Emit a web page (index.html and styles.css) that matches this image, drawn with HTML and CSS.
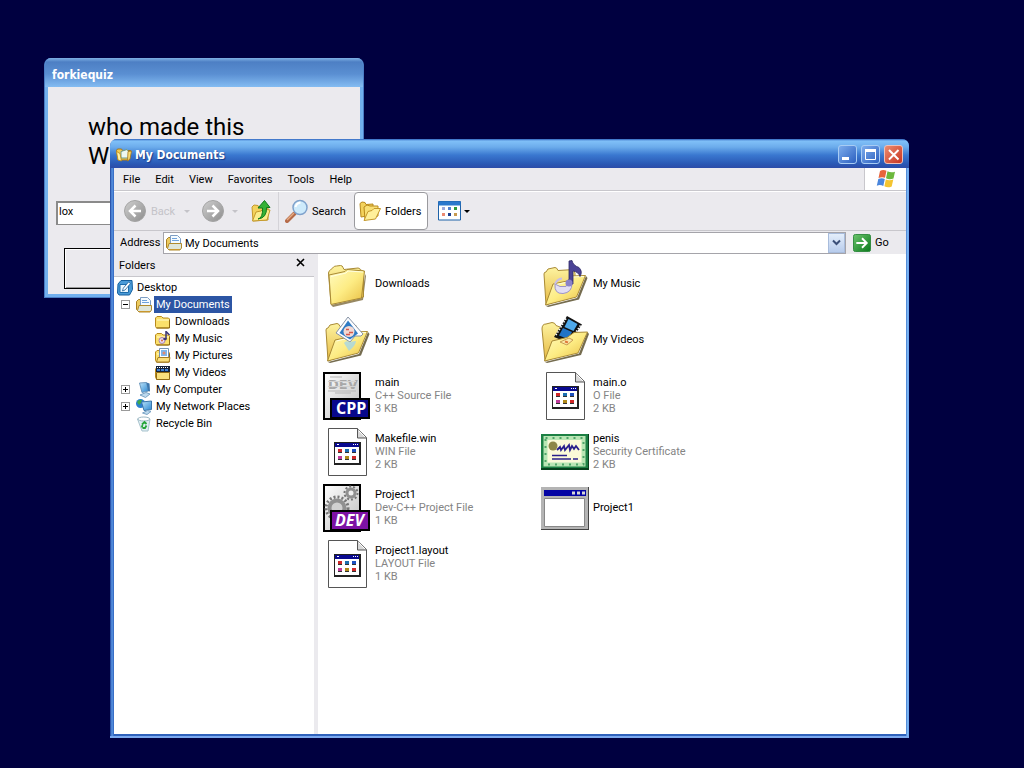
FILE: index.html
```
<!DOCTYPE html>
<html lang="en">
<head>
    <meta charset="utf-8">
    <title>My Documents</title>
    <link rel="stylesheet" href="styles.css">
</head>
<body>
    <svg class="defs" width="0" height="0" aria-hidden="true">
        <defs>
            <linearGradient id="gFolder" x1="0" y1="0" x2="1" y2="1">
                <stop offset="0" stop-color="#fffbc0"/>
                <stop offset="0.5" stop-color="#fdec84"/>
                <stop offset="1" stop-color="#e8bc40"/>
            </linearGradient>
            <linearGradient id="gFolderBack" x1="0" y1="0" x2="0" y2="1">
                <stop offset="0" stop-color="#fdf3a0"/>
                <stop offset="1" stop-color="#e6b840"/>
            </linearGradient>
            <linearGradient id="gGrey" x1="0" y1="0" x2="1" y2="1">
                <stop offset="0" stop-color="#cfcfcf"/>
                <stop offset="1" stop-color="#8d8d8d"/>
            </linearGradient>
            <linearGradient id="gGreen" x1="0" y1="0" x2="1" y2="1">
                <stop offset="0" stop-color="#6cc46c"/>
                <stop offset="1" stop-color="#0a7a1c"/>
            </linearGradient>
            <linearGradient id="gScreen" x1="0" y1="0" x2="1" y2="1">
                <stop offset="0" stop-color="#bfe6fb"/>
                <stop offset="1" stop-color="#2a86d0"/>
            </linearGradient>
            <linearGradient id="gPage" x1="0" y1="0" x2="1" y2="1">
                <stop offset="0" stop-color="#ffffff"/>
                <stop offset="1" stop-color="#bdbdbd"/>
            </linearGradient>

            <symbol id="folder-small" viewBox="0 0 16 16">
                <path d="M.5 4V12.500l1 1.500h12l1-1V5l-1-1H8L6.500 2.500H2z" fill="#fbe06c" stroke="#b98a1c"/>
                <path d="M2 6h12" stroke="#fffbd0"/>
                <path d="M1.500 14h13V6" fill="none" stroke="#8f6a14"/>
            </symbol>
            <symbol id="folder-docs" viewBox="0 0 16 16">
                <path d="M.5 4.500l2-2h3v11h-4l-1-1z" fill="#eccb60" stroke="#a87e20"/>
                <path d="M4.500.5h7l3 3v8h-10z" fill="#f4fbff" stroke="#7d9dc4"/>
                <path d="M6 3.500h5M6 5.500h7" stroke="#6ea2dc"/>
                <path d="M1.500 13.500l1.500-5h12.500v4.500l-1.500 2h-11z" fill="#dfe6da" stroke="#b08a2c"/>
                <path d="M3 14.500h11" stroke="#c9962c"/>
            </symbol>
            <symbol id="desktop" viewBox="0 0 16 16">
                <path d="M1 4l3-3.500h11l.5 9-3 5.500H2L.5 13z" fill="#4a9bd8" stroke="#145f9e"/>
                <path d="M3 4.500h8.500v8H3z" fill="#e8f6ff" stroke="#1c6cab"/>
                <path d="M11.500 2l2 1.500-5.500 6.500-2.500 1 .8-2.800z" fill="#fff" stroke="#1d5f98" stroke-width=".8"/>
            </symbol>
            <symbol id="folder-music" viewBox="0 0 16 16">
                <use href="#folder-small"/>
                <circle cx="7" cy="9.500" r="3" fill="#e9dcf4" stroke="#a87fae"/>
                <circle cx="7" cy="9.500" r="1" fill="#d8663c"/>
                <path d="M11 8V.5l3.500 3.500" fill="none" stroke="#3b3676" stroke-width="1.500"/>
                <ellipse cx="10" cy="8" rx="1.800" ry="1.300" fill="#3b3676"/>
            </symbol>
            <symbol id="folder-pics" viewBox="0 0 16 16">
                <use href="#folder-small"/>
                <path d="M4.500.5h9v9h-9z" fill="#fff" stroke="#7893b4"/>
                <path d="M6 2h6v6H6z" fill="#7db7ea"/>
                <circle cx="9" cy="5" r="1.500" fill="#e08a70"/>
                <path d="M1.500 14l1.500-4.500h12l-1 4.500z" fill="#f9df7c" stroke="#a87e20"/>
            </symbol>
            <symbol id="folder-video" viewBox="0 0 16 16">
                <use href="#folder-small"/>
                <path d="M1 1h14v6H1z" fill="#15233c"/>
                <path d="M2 2.500h12" stroke="#fff" stroke-dasharray="1 1"/>
                <path d="M2 5h12" stroke="#3f7fd0" stroke-width="2" stroke-dasharray="3 1"/>
                <path d="M1.500 7.500h13v7h-13z" fill="#f9df7c" stroke="#8f6a14"/>
            </symbol>
            <symbol id="computer" viewBox="0 0 16 16">
                <path d="M3.500 1l7-.5 2 8.500-6.500 1.500z" fill="url(#gScreen)" stroke="#6d98bd"/>
                <path d="M10.500.5l3 1 .5 8-2-.5z" fill="#3d77ad"/>
                <path d="M4 13l6-2.500 4 1.500-4.500 3.500z" fill="#bcd9ee" stroke="#7ba3c3"/>
            </symbol>
            <symbol id="network" viewBox="0 0 16 16">
                <circle cx="4.500" cy="4.500" r="4.500" fill="#2a80d0"/>
                <path d="M1 3q2-3 5-2l-1 3-2 2z" fill="#3fa84a"/>
                <path d="M5.500 3l10-1v8.500l-7.500 1z" fill="url(#gScreen)" stroke="#3a76ab"/>
                <path d="M6.500 14l5-2.500 3.500 1-4 3z" fill="#bcd9ee" stroke="#7ba3c3"/>
            </symbol>
            <symbol id="bin" viewBox="0 0 16 16">
                <path d="M1.500 3l12.500 0-2 12H6z" fill="#e0eef4" stroke="#a8c3cd"/>
                <ellipse cx="7.800" cy="3" rx="6" ry="2" fill="#fff" stroke="#9ab6c2"/>
                <path d="M6 8.500l2.500-2.500 2 2M10.500 9.500L9 12H6.500M5.800 11.500l.7-2.500" fill="none" stroke="#26a53a" stroke-width="1.800"/>
            </symbol>

            <symbol id="big-folder" viewBox="0 0 48 48">
                <path d="M8 45L39 38 42 14l1 2-3 24L10 47z" fill="#7d6a3c" opacity=".8"/>
                <path d="M5.500 13q0-2 2-3l3-3q1-1 3-1l4-.5q2 0 2.500 2l1 2 14-1.500q2 0 2.500 2l3 1v26L8 44z" fill="url(#gFolderBack)" stroke="#a98a35"/>
                <path d="M6 15l16-3.500 2-2 17.500 1.500-3 27L8 44.500z" fill="url(#gFolder)" stroke="#a98a35"/>
                <path d="M8 16.500l15-3.500 2-2 15 1" fill="none" stroke="#fffee0"/>
            </symbol>
            <symbol id="open-back" viewBox="0 0 48 48">
                <path d="M3 14q0-2 2-2l2-3 7-1.500q2 0 3 3l16-1 1 4v20L5 45z" fill="url(#gFolderBack)" stroke="#a98a35"/>
            </symbol>
            <symbol id="open-front" viewBox="0 0 48 48">
                <path d="M5 46L36 38 45 16l1.500 2L38 39.500 7 47z" fill="#5d5230" opacity=".85"/>
                <path d="M12 24l14-3 5-5 13.500-.5L35.500 37 4.500 45z" fill="url(#gFolder)" stroke="#a98a35"/>
                <path d="M13.500 25l13-3 5-5L43 16.500" fill="none" stroke="#fffee0"/>
            </symbol>
            <symbol id="big-music" viewBox="0 0 48 48">
                <use href="#open-back"/>
                <use href="#open-front"/>
                <path d="M14 24q-1 10 8 9.500 9-1 9-10l-5 0-1 3h-6z" fill="#e2def4" stroke="#9d93c8"/>
                <path d="M14 24q2-5 7-5.500" fill="none" stroke="#c8bfe6" stroke-width="2"/>
                <path d="M28 1l3-.5q1 5 7 7 4 4 1 9-2-5-7-5.500v13h-4z" fill="#4b4396" stroke="#2f2a66" stroke-width=".8"/>
                <ellipse cx="28" cy="23" rx="3.500" ry="3.500" fill="#8a82c8"/>
            </symbol>
            <symbol id="big-pics" viewBox="0 0 48 48">
                <use href="#open-back"/>
                <use href="#open-front"/>
                <path d="M25 1L40 18 38 20H32L27 26 13 17z" fill="#fdfdff" stroke="#8693a5"/>
                <path d="M25 4.500L35 17.500 27 23.500 16.500 17z" fill="#2f7bc4"/>
                <circle cx="26" cy="15.500" r="5.500" fill="#f1d9d4"/>
                <path d="M23 13.500h3M26 16.500h4M23 18.500h4" stroke="#d8584a" stroke-width="1.500"/>
                <path d="M21 27q2-3 5-1l7-1q0 4-7 10z" fill="#9fd4ec" opacity=".75"/>
            </symbol>
            <symbol id="big-video" viewBox="0 0 48 48">
                <path d="M1 13q0-5 4-5l6-1.500q3 0 4 3l4 1.500 16 0v22L4 45z" fill="url(#gFolderBack)" stroke="#a98a35"/>
                <path d="M26 0L41 8.500 28 27 13 21z" fill="#111"/>
                <path d="M27.500 3l9 5-4 7-9-4z" fill="#4fa9ea"/>
                <path d="M22 12l9 4-4 7-9-3.500z" fill="#2274c6"/>
                <path d="M25 2.500L14.500 20M39.500 9.500L28.500 25" stroke="#fff" stroke-width="1.500" stroke-dasharray="1.500 1.500"/>
                <path d="M4 46L38 37.500 46.500 16l1.500 2L40 39 6 47z" fill="#5d5230" opacity=".85"/>
                <path d="M11 25l15-3.500 7-5 13.500-.5L37 37 3.500 45z" fill="url(#gFolder)" stroke="#a98a35"/>
                <path d="M19 26l9-4 4 2-6 5z" fill="#fbe9a8" stroke="#c89c50"/>
                <path d="M24 25.500l3 1" stroke="#e07a3c" stroke-width="2"/>
            </symbol>
            <symbol id="file" viewBox="0 0 48 48">
                <path d="M5.500.5h29l9 9v38h-38z" fill="#fff" stroke="#555"/>
                <path d="M34.500.5v9.500h9" fill="#d8d8d8" stroke="#555"/>
                <path d="M36 3l6 6" stroke="#fff"/>
                <path d="M11 14h27v23H11z" fill="#222"/>
                <path d="M12 15h24v20H12z" fill="#fff"/>
                <path d="M12 15h24v4H12z" fill="#0a0a90"/>
                <path d="M14 16.500h2M30 16.500h1M32 16.500h1M34 16.500h1" stroke="#fff"/>
                <path d="M15 21h4v3h-4z" fill="#d02828"/>
                <path d="M22 21h4v3h-4z" fill="#1b6fb0"/>
                <path d="M29 21h4v3h-4z" fill="#1c50c0"/>
                <path d="M15 28h4v3h-4z" fill="#c03c9c"/>
                <path d="M22 28h4v3h-4z" fill="#b08a18"/>
                <path d="M29 28h4v3h-4z" fill="#d02828"/>
                <path d="M15 24.500h4M22 24.500h4M29 24.500h4M15 31.500h4M22 31.500h4M29 31.500h4" stroke="#333"/>
            </symbol>
            <symbol id="cpp" viewBox="0 0 48 48">
                <path d="M1 1h36v46H1z" fill="url(#gPage)" stroke="#000" stroke-width="2"/>
                <path d="M7 5h12M5 19h28M12 21h16" stroke="#b5b5b5"/>
                <text x="5" y="17" class="cpp-ghost">DEV</text>
                <path d="M5 9.500h28M5 14.500h28" stroke="#d2d2d2"/>
                <path d="M8 27h38v19H8z" fill="#08088c" stroke="#000" stroke-width="2"/>
                <text x="13" y="42" class="badge-text">CPP</text>
            </symbol>
            <symbol id="dev" viewBox="0 0 48 48">
                <path d="M1 1h36v46H1z" fill="url(#gPage)" stroke="#000" stroke-width="2"/>
                <circle cx="14" cy="24" r="11" fill="none" stroke="#777" stroke-width="3" stroke-dasharray="2 2"/>
                <circle cx="14" cy="24" r="7.500" fill="#d0d0d0" stroke="#909090" stroke-width="4"/>
                <circle cx="28" cy="9" r="6.500" fill="none" stroke="#777" stroke-width="2" stroke-dasharray="2 2"/>
                <circle cx="28" cy="9" r="4" fill="#eee" stroke="#909090" stroke-width="3"/>
                <path d="M8 27h38v19H8z" fill="#7d12a4" stroke="#000" stroke-width="2"/>
                <text x="12" y="42" class="badge-text slant">DEV</text>
            </symbol>
            <symbol id="cert" viewBox="0 0 48 48">
                <path d="M0 6h48v36H0z" fill="#06401c"/>
                <path d="M0 6h47v34H0z" fill="#1c8044"/>
                <path d="M4.500 10h38v26.500h-38z" fill="#fafad8" stroke="#b9e6b4" stroke-width="4"/>
                <path d="M4.500 10h38v26.500h-38z" fill="none" stroke="#4fa468" stroke-width="2" stroke-dasharray="2 5"/>
                <circle cx="12" cy="18" r="4.500" fill="#8c8648"/>
                <path d="M16 22l3-3 1 3 3-4 1 4 4-5 1 5 2-4 2 3 2-3 3 4" fill="none" stroke="#28208c" stroke-width="1.800"/>
                <path d="M11 27.500h15M11 31h19M32 31h5" stroke="#28208c" stroke-width="1.600"/>
            </symbol>
            <symbol id="exe" viewBox="0 0 48 48">
                <path d="M0 3h48v43H0z" fill="#444"/>
                <path d="M0 3h47v42H0z" fill="#b4b4b4"/>
                <path d="M3 6h42v6H3z" fill="#0404a4"/>
                <path d="M31 9h3M36 9h3M41 9h3" stroke="#d8d8d8" stroke-width="3"/>
                <path d="M3.500 14.500h40v28h-40z" fill="#fff" stroke="#888"/>
            </symbol>
        </defs>
    </svg>

    <main class="screen">
        <section class="window quiz">
            <header class="titlebar">
                <h2>forkiequiz</h2>
            </header>
            <div class="quiz-body">
                <p><label for="answer">who made this<br>W</label></p>
                <input type="text" id="answer" value="lox">
                <button type="button" aria-label="Submit"></button>
            </div>
        </section>

        <section class="window explorer">
            <header class="titlebar">
                <svg class="icon16" viewBox="0 0 16 16">
                    <path d="M.5 3.500l1-1.500h4l1 1.500h8L13 13H2z" fill="#f4cc50" stroke="#a5761a"/>
                    <path d="M5 4.500l6-2 1.500 2v6.500H5z" fill="#eef8f0" stroke="#6c9a8c"/>
                    <path d="M.5 4.500l3.500 2 1.500 7.500L2 13z" fill="#fff2a8" stroke="#b98a1c" stroke-width=".8"/>
                    <path d="M12 4.500l3.500-.5-1.500 8-2.500 2z" fill="#f9dc74" stroke="#a5761a" stroke-width=".8"/>
                </svg>
                <h1>My Documents</h1>
                <div class="caption-buttons">
                    <button type="button" aria-label="Minimize"><svg viewBox="0 0 17 17"><path d="M3 12.500h7" stroke="#fff" stroke-width="3"/></svg></button>
                    <button type="button" aria-label="Maximize"><svg viewBox="0 0 17 17"><path d="M3.500 4.500h10v9h-10z" fill="none" stroke="#fff"/><path d="M3 4.500h11" stroke="#fff" stroke-width="3"/></svg></button>
                    <button type="button" class="close" aria-label="Close"><svg viewBox="0 0 17 17"><path d="M4 4l9.500 9.500M13.500 4L4 13.500" stroke="#fff" stroke-width="2"/></svg></button>
                </div>
            </header>

            <nav class="menubar">
                <button type="button">File</button>
                <button type="button">Edit</button>
                <button type="button">View</button>
                <button type="button">Favorites</button>
                <button type="button">Tools</button>
                <button type="button">Help</button>
                <span class="flag">
                    <svg width="20" height="20" viewBox="0 0 20 20">
                        <path d="M4 2q3-2 6.500-.2L9 8.800Q6 7.500 2.500 9z" fill="#e8643c"/>
                        <path d="M11.500 2.200q3.500 2 7.500.5L17.500 9.500q-4 1.500-7.500-.3z" fill="#6cb83c"/>
                        <path d="M2.300 10q3.500-1.500 6.500 0L7.300 17Q4 15.300.8 16.800z" fill="#4a86dc"/>
                        <path d="M9.800 10.500q3.500 1.500 7.500 0L15.700 17.500q-4 1.800-7.300-.2z" fill="#f4c430"/>
                    </svg>
                </span>
            </nav>

            <div class="toolbar">
                <button type="button" class="back" disabled>
                    <svg width="22" height="22" viewBox="0 0 22 22"><circle cx="11" cy="11" r="10.500" fill="url(#gGrey)" stroke="#a4a4a4"/><path d="M17 11H7M11.500 5.500L6 11l5.500 5.500" fill="none" stroke="#fff" stroke-width="2.500"/></svg>
                    <span>Back</span>
                    <i class="arrow"></i>
                </button>
                <button type="button" class="forward" aria-label="Forward" disabled>
                    <svg width="22" height="22" viewBox="0 0 22 22"><circle cx="11" cy="11" r="10.500" fill="url(#gGrey)" stroke="#a4a4a4"/><path d="M5 11h10M10.500 5.500L16 11l-5.500 5.500" fill="none" stroke="#fff" stroke-width="2.500"/></svg>
                    <i class="arrow"></i>
                </button>
                <button type="button" class="up" aria-label="Up">
                    <svg width="22" height="24" viewBox="0 0 22 24">
                        <path d="M2 8l2-2 4 .5 1 2 9 .5v12L3 22z" fill="#f3d25c" stroke="#c4992c"/>
                        <path d="M2.500 22L6 13l5-1 2-2 7 1-3 10z" fill="#fbed8c" stroke="#c4992c"/>
                        <path d="M8 20q5-1 4.500-11H8L14.500 1.500 20 8.500h-3.500Q17 19 8 20z" fill="#35b135" stroke="#107a1c"/>
                    </svg>
                </button>
                <button type="button" class="search">
                    <svg width="24" height="24" viewBox="0 0 24 24">
                        <path d="M9.500 14.500L2 22" stroke="#b56a48" stroke-width="4" stroke-linecap="round"/>
                        <path d="M9 14L2 21" stroke="#e6ac84" stroke-width="1.500"/>
                        <circle cx="15" cy="8.500" r="7" fill="#cdeafb" stroke="#7fa2cc" stroke-width="1.500"/>
                        <path d="M10.500 8q1-4 5-4.500" fill="none" stroke="#fff" stroke-width="2"/>
                    </svg>
                    <span>Search</span>
                </button>
                <button type="button" class="folders" aria-pressed="true">
                    <svg width="22" height="22" viewBox="0 0 22 22">
                        <path d="M1 3.500L3 2l3 .5 1 2 7-.5v11l-12 2z" fill="#f3d25c" stroke="#b98a1c"/>
                        <path d="M5 7l3-2 3 1 8 0v10L6 20z" fill="#f8df74" stroke="#b98a1c"/>
                        <path d="M5 20.500l4-9 4-1 2-2h6.500l-5 10.500z" fill="#fff09a" stroke="#c4992c"/>
                    </svg>
                    <span>Folders</span>
                </button>
                <button type="button" class="views" aria-label="Views">
                    <svg width="23" height="20" viewBox="0 0 23 20">
                        <path d="M.5.5h22v18.500H.5z" fill="#fff" stroke="#1e62a8"/>
                        <path d="M.5.5h22v4H.5z" fill="#2a78cc"/>
                        <path d="M4 6h3v3H4z" fill="#9ba9dc"/><path d="M10 6h3v3h-3z" fill="#5282d0"/><path d="M16 6h3v3h-3z" fill="#2e9a3c"/>
                        <path d="M4 12h3v3H4z" fill="#ec8a70"/><path d="M10 12h3v3h-3z" fill="#1c3f90"/><path d="M16 12h3v3h-3z" fill="#c79a50"/>
                    </svg>
                    <i class="arrow"></i>
                </button>
            </div>

            <div class="addressbar">
                <label for="address">Address</label>
                <div class="address-box">
                    <svg class="icon16"><use href="#folder-docs"/></svg>
                    <select id="address">
                        <option>My Documents</option>
                    </select>
                    <span class="drop"><svg width="9" height="7" viewBox="0 0 9 7"><path d="M1 1.500L4.500 5 8 1.500" fill="none" stroke="#3b4f78" stroke-width="2"/></svg></span>
                </div>
                <button type="button" class="go">
                    <svg width="18" height="18" viewBox="0 0 19 19"><rect x=".5" y=".5" width="18" height="18" rx="2" fill="url(#gGreen)" stroke="#2d8a3c"/><path d="M3.500 9.500h11M9.500 4.500l5 5-5 5" fill="none" stroke="#fff" stroke-width="2"/></svg>
                    <span>Go</span>
                </button>
            </div>

            <div class="content">
                <aside class="folder-pane">
                    <div class="pane-head">
                        <h3>Folders</h3>
                        <button type="button" aria-label="Close folders"><svg width="9" height="9" viewBox="0 0 9 9"><path d="M1 1l7 7M8 1L1 8" stroke="#000" stroke-width="1.600"/></svg></button>
                    </div>
                    <ul class="tree">
                        <li class="root"><svg class="icon16"><use href="#desktop"/></svg><span>Desktop</span></li>
                        <li><i class="expander minus"></i><svg class="icon16"><use href="#folder-docs"/></svg><span class="selected">My Documents</span></li>
                        <li class="child"><svg class="icon16"><use href="#folder-small"/></svg><span>Downloads</span></li>
                        <li class="child"><svg class="icon16"><use href="#folder-music"/></svg><span>My Music</span></li>
                        <li class="child"><svg class="icon16"><use href="#folder-pics"/></svg><span>My Pictures</span></li>
                        <li class="child"><svg class="icon16"><use href="#folder-video"/></svg><span>My Videos</span></li>
                        <li><i class="expander plus"></i><svg class="icon16"><use href="#computer"/></svg><span>My Computer</span></li>
                        <li><i class="expander plus"></i><svg class="icon16"><use href="#network"/></svg><span>My Network Places</span></li>
                        <li><i class="expander none"></i><svg class="icon16"><use href="#bin"/></svg><span>Recycle Bin</span></li>
                    </ul>
                </aside>

                <ul class="files">
                    <li><svg><use href="#big-folder"/></svg><p>Downloads</p></li>
                    <li><svg><use href="#big-music"/></svg><p>My Music</p></li>
                    <li><svg><use href="#big-pics"/></svg><p>My Pictures</p></li>
                    <li><svg><use href="#big-video"/></svg><p>My Videos</p></li>
                    <li><svg><use href="#cpp"/></svg><p>main<small>C++ Source File</small><small>3 KB</small></p></li>
                    <li><svg><use href="#file"/></svg><p>main.o<small>O File</small><small>2 KB</small></p></li>
                    <li><svg><use href="#file"/></svg><p>Makefile.win<small>WIN File</small><small>2 KB</small></p></li>
                    <li><svg><use href="#cert"/></svg><p>penis<small>Security Certificate</small><small>2 KB</small></p></li>
                    <li><svg><use href="#dev"/></svg><p>Project1<small>Dev-C++ Project File</small><small>1 KB</small></p></li>
                    <li><svg><use href="#exe"/></svg><p>Project1</p></li>
                    <li><svg><use href="#file"/></svg><p>Project1.layout<small>LAYOUT File</small><small>1 KB</small></p></li>
                </ul>
            </div>
        </section>
    </main>
</body>
</html>
```
FILE: styles.css
```
* {
    box-sizing: border-box;
}

body {
    margin: 0;
    background-color: #000040;
    font-family: Roboto, "DejaVu Sans", sans-serif;
    font-size: 11px;
    line-height: 13px;
    color: #000;
}

h1, h2, h3, p, ul {
    margin: 0;
    padding: 0;
}

ul {
    list-style: none;
}

button, input, select {
    font: inherit;
    color: inherit;
}

button {
    display: flex;
    align-items: center;
    padding: 0;
    border: none;
    background: none;
}

svg {
    display: block;
    flex: none;
}

.defs {
    position: absolute;
}

.icon16 {
    width: 16px;
    height: 16px;
}

.screen {
    position: relative;
    min-height: 100vh;
    overflow: hidden;
}

/* windows */
.window {
    position: absolute;
    display: flex;
    flex-direction: column;
    border-radius: 7px 7px 0 0;
    overflow: hidden;
}

.titlebar {
    display: flex;
    align-items: center;
    flex: none;
    height: 29px;
    color: #fff;
}

.titlebar h1, .titlebar h2 {
    font-family: "DejaVu Sans Condensed", "DejaVu Sans", sans-serif;
    font-size: 12px;
    font-weight: bold;
    text-shadow: 1px 1px 1px #1c3c88;
}

.quiz {
    top: 58px;
    left: 44px;
    width: 320px;
    height: 240px;
    padding: 0 3px 3px;
    background-color: #72b0ee;
    border: 1px solid #4a7cc4;
    border-top: none;
}

.quiz .titlebar {
    margin: 0 -4px;
    padding: 6px 8px 0 8px;
    background: linear-gradient(#7fb0e4 0, #4d7fc4 4px, #5a8fd2 16px, #84bcf2 100%);
}

.quiz .titlebar h2 {
    text-shadow: none;
}

.quiz-body {
    flex: 1;
    padding: 26px 16px 0 8px;
    background-color: #ebeaee;
}

.quiz-body p {
    padding-left: 32px;
    font-size: 24px;
    line-height: 29px;
}

.quiz-body input {
    display: block;
    width: 200px;
    height: 24px;
    margin-top: 30px;
    padding: 0 1px 5px;
    border: 1px solid #8a8a8a;
    border-width: 2px 1px 1px 2px;
    background-color: #fff;
}

.quiz-body button {
    width: 180px;
    height: 41px;
    margin: 23px 0 0 8px;
    border: 1px solid #000;
    box-shadow: inset 1px 1px #fff, inset -1px -1px #999;
}

.explorer {
    top: 139px;
    right: 115px;
    bottom: 30px;
    left: 110px;
    padding: 0 3px 2px 4px;
    border-bottom: 2px solid #7caaf0;
    background: linear-gradient(90deg, #1c3f98 0, #5a96e4 2px, #2f62bc 4px, #2f62bc calc(100% - 3px), #7cb8f4 calc(100% - 2px), #6ca4ec 100%);
}

.explorer .titlebar {
    gap: 3px;
    margin: 0 -3px 0 -4px;
    padding: 3px 6px 0 6px;
    background: linear-gradient(#2f62bc 0, #80c0f8 2px, #6cacec 8px, #3a78d0 16px, #2a58b4 25px, #2c4ca8 100%);
}

.caption-buttons {
    display: flex;
    gap: 4px;
    margin-left: auto;
    padding-bottom: 2px;
}

.caption-buttons button {
    width: 19px;
    height: 19px;
    border: 1px solid #a8ccf4;
    border-radius: 3px;
    background: linear-gradient(135deg, #7cacec, #2c60c0);
}

.caption-buttons .close {
    border-color: #eec0b8;
    background: linear-gradient(135deg, #ec8c70, #c83420);
}

.caption-buttons svg {
    width: 17px;
    height: 17px;
}

/* bars */
.menubar {
    display: flex;
    flex: none;
    height: 23px;
    padding-left: 9px;
    gap: 15px;
    background-color: #ebeaee;
    border-bottom: 1px solid #c8c7cc;
}

.flag {
    display: flex;
    align-items: center;
    justify-content: center;
    width: 42px;
    margin-left: auto;
    border-left: 1px solid #c8c7cc;
    background-color: #fff;
}

.toolbar {
    display: flex;
    align-items: center;
    flex: none;
    height: 40px;
    padding: 0 10px;
    background-color: #ebeaee;
    border-top: 1px solid #fff;
    border-bottom: 1px solid #c8c7cc;
}

.arrow {
    border: 3px solid transparent;
    border-top-color: #000;
    border-bottom: none;
}

.toolbar button:disabled {
    color: #c4c3c8;
}

.toolbar button:disabled .arrow {
    border-top-color: #c4c3c8;
}

.back {
    gap: 5px;
    width: 66px;
}

.back .arrow {
    margin-left: auto;
}

.forward {
    gap: 8px;
    margin-left: 12px;
}

.up {
    padding-right: 6px;
    margin-left: 12px;
}

.search {
    gap: 3px;
    width: 76px;
    height: 38px;
    padding-left: 6px;
    border-left: 1px solid #d4d3d8;
}

.folders {
    gap: 4px;
    width: 74px;
    height: 38px;
    padding-left: 4px;
    border: 1px solid #9a9a9e;
    border-radius: 4px;
    background-color: #fff;
}

.views {
    gap: 3px;
    margin-left: 10px;
}

.addressbar {
    display: flex;
    align-items: center;
    flex: none;
    height: 23px;
    padding-left: 6px;
    background-color: #ebeaee;
}

.addressbar label {
    width: 43px;
}

.address-box {
    display: flex;
    flex: 1;
    align-items: center;
    height: 22px;
    padding: 0 0 0 2px;
    border: 1px solid #a5a4aa;
    background-color: #fff;
}

.address-box select {
    flex: 1;
    height: 18px;
    padding: 1px 3px 0;
    border: none;
    appearance: none;
    background: none;
}

.drop {
    display: flex;
    align-items: center;
    justify-content: center;
    width: 17px;
    height: 20px;
    border: 1px solid #a8bcdc;
    background: linear-gradient(#e4eefb, #b8ccec);
}

.go {
    gap: 4px;
    width: 53px;
    margin-left: 7px;
}

/* content */
.content {
    display: flex;
    flex: 1;
    min-height: 0;
    background-color: #fff;
}

.folder-pane {
    width: 204px;
    border-right: 4px solid #ebeaee;
}

.pane-head {
    display: flex;
    align-items: center;
    justify-content: space-between;
    height: 23px;
    padding: 0 9px 0 5px;
    background-color: #ebeaee;
    border-bottom: 1px solid #c8c7cc;
}

.pane-head h3 {
    font-size: 11px;
    font-weight: normal;
}

.pane-head button {
    height: 18px;
    padding-bottom: 6px;
}

.tree {
    padding-top: 2px;
}

.tree li {
    display: flex;
    align-items: center;
    height: 17px;
    padding-left: 7px;
}

.tree li.root {
    padding-left: 3px;
}

.tree li.child {
    padding-left: 41px;
}

.tree span {
    margin-left: 2px;
    padding: 2px;
}

.tree .selected {
    background-color: #2c55a4;
    color: #fff;
}

.expander {
    width: 9px;
    height: 9px;
    margin-right: 6px;
    border: 1px solid #9a9a9a;
    background: linear-gradient(#000, #000) center / 5px 1px no-repeat;
}

.expander.plus {
    background: linear-gradient(#000, #000) center / 5px 1px no-repeat, linear-gradient(#000, #000) center / 1px 5px no-repeat;
}

.expander.none {
    border: none;
    background: none;
}

.files {
    display: grid;
    grid-template-columns: repeat(2, 218px);
    grid-auto-rows: 56px;
    flex: 1;
    padding: 2px 0 0 5px;
}

.files li {
    display: flex;
    align-items: center;
    gap: 4px;
}

.files svg {
    width: 48px;
    height: 48px;
}

.files p {
    padding-bottom: 2px;
}

.files small {
    display: block;
    font-size: 11px;
    color: #848484;
}

.cpp-ghost {
    font: bold 13px "DejaVu Sans", sans-serif;
    fill: #a8a8a8;
}

.badge-text {
    font: bold 16px "Open Sans", sans-serif;
    fill: #fff;
}

.slant {
    font-style: italic;
}
```
